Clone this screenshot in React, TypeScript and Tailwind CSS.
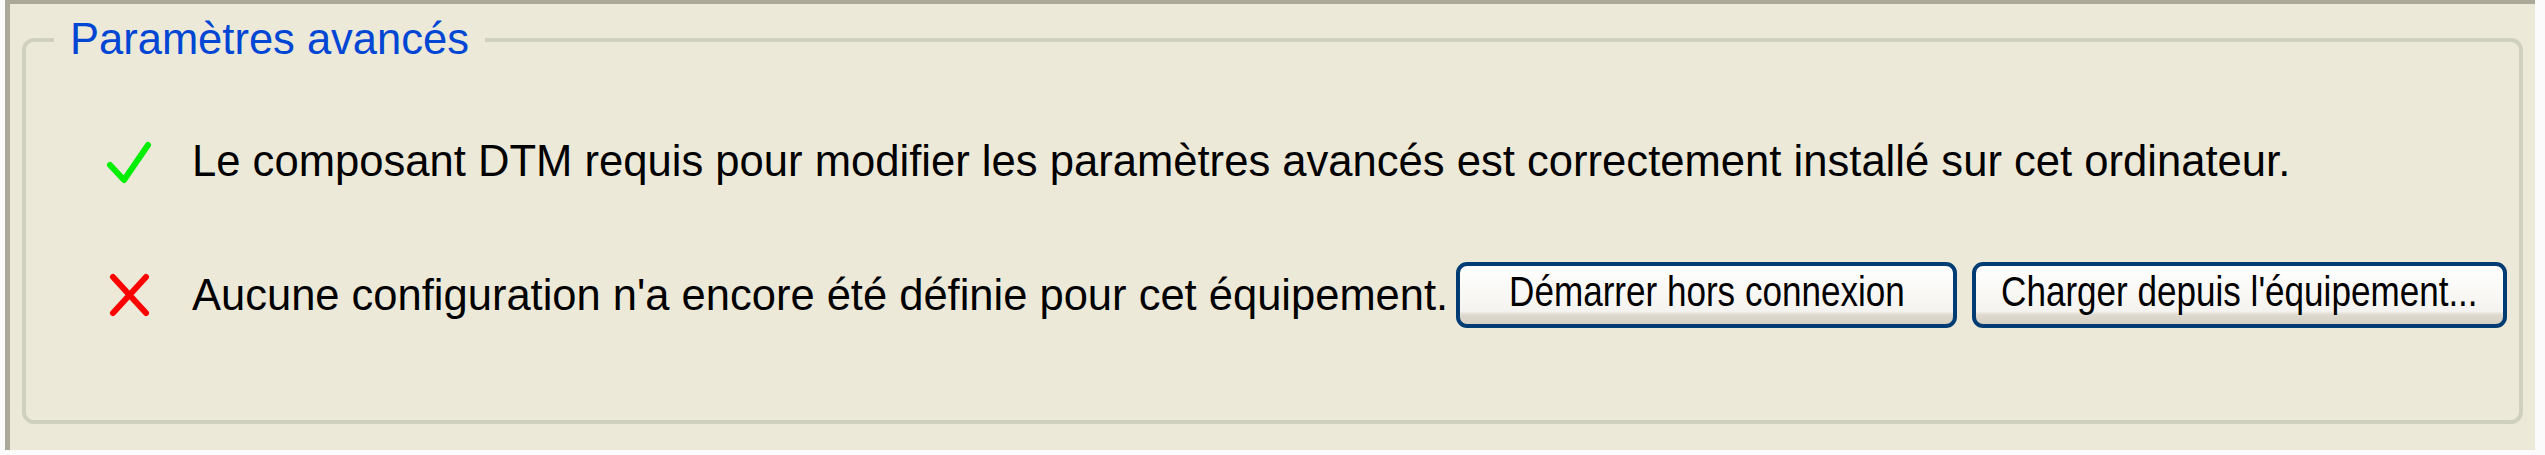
import React from 'react'

const font = { fontFamily: '"Liberation Sans", Arial, sans-serif' }

function CheckIcon() {
  return (
    <svg width="48" height="48" viewBox="0 0 48 48" fill="none">
      <path d="M5 28 L19 43 L43 8" stroke="#00ee00" strokeWidth={6} strokeLinecap="round" strokeLinejoin="round" />
    </svg>
  )
}

function CrossIcon() {
  return (
    <svg width="48" height="48" viewBox="0 0 48 48" fill="none">
      <path d="M8 6 L41 42 M41 6 L8 42" stroke="#ff0000" strokeWidth={6} strokeLinecap="round" />
    </svg>
  )
}

function XpButton({ label, width }: { label: string; width: string }) {
  return (
    <button
      className={`${width} h-[66px] shrink-0 flex items-center justify-center pb-[6px] border-4 border-[#003c74] rounded-[11px] bg-[linear-gradient(to_bottom,#ffffff_0%,#f4f3ef_78%,#dedacf_84%,#d6d0c4_100%)] text-black text-[42px] leading-none whitespace-nowrap overflow-visible`}
    >
      <span className="inline-block scale-x-[0.835]">{label}</span>
    </button>
  )
}

export default function App() {
  return (
    <div className="w-[2545px] h-[455px] bg-[#fbfbfb] overflow-hidden" style={font}>
      {/* Panel */}
      <div className="ml-[5px] w-[2530px] h-[450px] bg-[#ece9d8] border-t-4 border-l-[5px] border-[#aca899] pt-[11px]">
        {/* Group box */}
        <fieldset className="ml-[12px] w-[2501px] h-[409px] border-4 border-[#d0d0bf] rounded-[12px]">
          <legend className="ml-[28px] px-[16px] text-[43.5px] leading-[49px] text-[#0046d5]">Paramètres avancés</legend>

          {/* Row 1 */}
          <div className="mt-[72px] h-[50px] flex items-center pl-[79px]">
            <div className="w-[48px] h-[48px] shrink-0">
              <CheckIcon />
            </div>
            <span className="ml-[39px] text-[43.6px] leading-[50px] text-black whitespace-nowrap">
              Le composant DTM requis pour modifier les paramètres avancés est correctement installé sur cet ordinateur.
            </span>
          </div>

          {/* Row 2 */}
          <div className="mt-[76px] h-[66px] flex items-center pl-[79px]">
            <div className="w-[48px] h-[48px] shrink-0">
              <CrossIcon />
            </div>
            <span className="ml-[39px] text-[43.5px] leading-[50px] text-black whitespace-nowrap">
              Aucune configuration n'a encore été définie pour cet équipement.
            </span>
            <div className="ml-[8px] flex gap-[15px]">
              <XpButton label="Démarrer hors connexion" width="w-[501px]" />
              <XpButton label="Charger depuis l'équipement..." width="w-[535px]" />
            </div>
          </div>
        </fieldset>
      </div>
    </div>
  )
}
